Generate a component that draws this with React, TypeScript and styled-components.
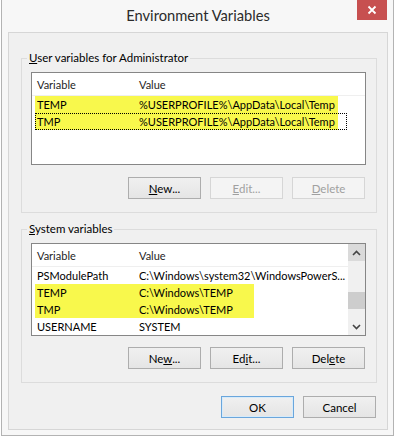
import React from "react";
import styled, { createGlobalStyle } from "styled-components";

const Global = createGlobalStyle`
  html, body { margin: 0; padding: 0; background: #ffffff; }
  body { font-family: Lato, "Liberation Sans", sans-serif; font-size: 11px; color: #000; }
  * { box-sizing: border-box; }
`;

const Window = styled.div`
  margin-left: 1px;
  width: 393px;
  height: 436px;
  border: 1px solid #b3b3b3;
  border-top: none;
  background: #f7f7f7;
  display: flex;
  flex-direction: column;
  padding: 0 5px 5px 6px;
`;

const TitleBar = styled.div`
  height: 32px;
  display: grid;
  grid-template-columns: 1fr auto 1fr;
  align-items: start;
`;

const Title = styled.div`
  grid-column: 2;
  font-size: 14.7px;
  line-height: 30px;
  color: #2b2b2b;
  white-space: nowrap;
`;

const CloseButton = styled.div`
  grid-column: 3;
  justify-self: end;
  margin-right: 1px;
  width: 30px;
  height: 20px;
  background: #c75050;
  display: flex;
  align-items: center;
  justify-content: center;
`;

const Client = styled.div`
  flex: 1;
  border: 1px solid #d6d6d6;
  background: #f0f0f0;
  padding: 17px 10px 0 12px;
  display: flex;
  flex-direction: column;
`;

const Group = styled.fieldset<{ $gap: number }>`
  margin: ${(p) => p.$gap}px 0 0 0;
  padding: 6px 10px 13px 9px;
  border: 1px solid #dcdcdc;
  min-width: 0;
`;

const Legend = styled.legend`
  padding: 0 2px;
  margin-left: -4px;
  line-height: 16px;
  font-size: 11.5px;
  color: #000;
`;

const ListBox = styled.div`
  height: 93px;
  border: 1px solid #868686;
  background: #ffffff;
  display: flex;
  overflow: hidden;
`;

const ListContent = styled.div`
  flex: 1;
  min-width: 0;
  overflow: hidden;
`;

const Header = styled.div`
  height: 23px;
  border-bottom: 1px solid #efefef;
  display: grid;
  grid-template-columns: 102px 1fr;
  padding-left: 5px;
  align-items: center;
  color: #1e1e1e;
`;

const Row = styled.div<{ $mark: number; $focus?: boolean }>`
  margin-left: 3px;
  width: 312px;
  height: 17px;
  display: grid;
  grid-template-columns: 102px 1fr;
  padding-left: 2px;
  align-items: center;
  white-space: nowrap;
  color: #000;
  background: ${(p) =>
    p.$mark > 0
      ? `linear-gradient(to right, #f8f84c 0, #f8f84c ${p.$mark}px, transparent ${p.$mark}px)`
      : "transparent"};
  outline: ${(p) => (p.$focus ? "1px dotted #000" : "none")};
  outline-offset: -1px;
`;

const Cell = styled.span`
  overflow: hidden;
`;

const ScrollBar = styled.div`
  width: 17px;
  background: #f0f0f0;
  display: flex;
  flex-direction: column;
`;

const ScrollArrow = styled.div<{ $hot?: boolean }>`
  height: 17px;
  background: ${(p) => (p.$hot ? "#dadada" : "#f0f0f0")};
  display: flex;
  align-items: center;
  justify-content: center;
`;

const ScrollTrack = styled.div`
  flex: 1;
  padding-top: 31px;
`;

const Thumb = styled.div`
  height: 17px;
  background: #cdcdcd;
`;

const ButtonRow = styled.div<{ $top: number }>`
  margin-top: ${(p) => p.$top}px;
  display: flex;
  justify-content: flex-end;
  gap: 9px;
  padding-right: 1px;
`;

const Button = styled.div<{ $disabled?: boolean; $default?: boolean }>`
  width: 73px;
  height: 22px;
  display: flex;
  align-items: center;
  justify-content: center;
  font-size: 11.5px;
  border: 1px solid
    ${(p) => (p.$disabled ? "#d6d6d6" : p.$default ? "#6aa6dc" : "#adadad")};
  background: ${(p) =>
    p.$disabled ? "#f4f4f4" : "linear-gradient(#f0f0f0, #e5e5e5)"};
  color: ${(p) => (p.$disabled ? "#a0a0a0" : "#000")};
  box-shadow: ${(p) => (p.$default ? "inset 0 0 0 1px #d7ebfa" : "none")};
`;

const Footer = styled.div`
  margin-top: 13px;
  display: flex;
  justify-content: flex-end;
  gap: 9px;
  padding-right: 1px;
`;

const Chevron = ({ up }: { up?: boolean }) => (
  <svg width="9" height="6" viewBox="0 0 9 6">
    <polyline
      points={up ? "1,5 4.5,1.5 8,5" : "1,1 4.5,4.5 8,1"}
      fill="none"
      stroke="#444"
      strokeWidth="1.6"
    />
  </svg>
);

export default function App() {
  return (
    <>
      <Global />
      <Window>
        <TitleBar>
          <Title>Environment Variables</Title>
          <CloseButton>
            <svg width="10" height="10" viewBox="0 0 10 10">
              <path d="M1.5 1.5 L8.5 8.5 M8.5 1.5 L1.5 8.5" stroke="#fff" strokeWidth="1.8" />
            </svg>
          </CloseButton>
        </TitleBar>
        <Client>
          <Group $gap={0}>
            <Legend>
              <u>U</u>ser variables for Administrator
            </Legend>
            <ListBox>
              <ListContent>
                <Header>
                  <span>Variable</span>
                  <span>Value</span>
                </Header>
                <Row $mark={303}>
                  <Cell>TEMP</Cell>
                  <Cell>{"%USERPROFILE%\\AppData\\Local\\Temp"}</Cell>
                </Row>
                <Row $mark={303} $focus>
                  <Cell>TMP</Cell>
                  <Cell>{"%USERPROFILE%\\AppData\\Local\\Temp"}</Cell>
                </Row>
              </ListContent>
            </ListBox>
            <ButtonRow $top={12}>
              <Button>
                <span>
                  <u>N</u>ew...
                </span>
              </Button>
              <Button $disabled>
                <span>
                  <u>E</u>dit...
                </span>
              </Button>
              <Button $disabled>
                <span>
                  <u>D</u>elete
                </span>
              </Button>
            </ButtonRow>
          </Group>
          <Group $gap={8}>
            <Legend>
              <u>S</u>ystem variables
            </Legend>
            <ListBox>
              <ListContent>
                <Header>
                  <span>Variable</span>
                  <span>Value</span>
                </Header>
                <Row $mark={0}>
                  <Cell>PSModulePath</Cell>
                  <Cell>{"C:\\Windows\\system32\\WindowsPowerS..."}</Cell>
                </Row>
                <Row $mark={219}>
                  <Cell>TEMP</Cell>
                  <Cell>{"C:\\Windows\\TEMP"}</Cell>
                </Row>
                <Row $mark={219}>
                  <Cell>TMP</Cell>
                  <Cell>{"C:\\Windows\\TEMP"}</Cell>
                </Row>
                <Row $mark={0}>
                  <Cell>USERNAME</Cell>
                  <Cell>SYSTEM</Cell>
                </Row>
              </ListContent>
              <ScrollBar>
                <ScrollArrow $hot>
                  <Chevron up />
                </ScrollArrow>
                <ScrollTrack>
                  <Thumb />
                </ScrollTrack>
                <ScrollArrow>
                  <Chevron />
                </ScrollArrow>
              </ScrollBar>
            </ListBox>
            <ButtonRow $top={11}>
              <Button>
                <span>
                  Ne<u>w</u>...
                </span>
              </Button>
              <Button>
                <span>
                  Ed<u>i</u>t...
                </span>
              </Button>
              <Button>
                <span>
                  Del<u>e</u>te
                </span>
              </Button>
            </ButtonRow>
          </Group>
          <Footer>
            <Button $default>OK</Button>
            <Button>Cancel</Button>
          </Footer>
        </Client>
      </Window>
    </>
  );
}
